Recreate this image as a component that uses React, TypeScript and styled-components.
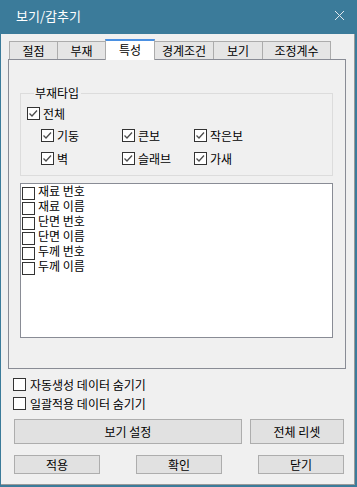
import { createGlobalStyle, styled } from "styled-components";

const GlobalStyle = createGlobalStyle`
    html, body {
        margin: 0;
        padding: 0;
        background: #ffffff;
    }
    * {
        box-sizing: border-box;
    }
`;

const FONT = `"Noto Sans CJK KR", "Noto Sans", sans-serif`;

const Window = styled.div`
    width: 357px;
    height: 487px;
    display: flex;
    flex-direction: column;
    background: #3b7b9a;
    padding: 0 2px 2px 1px;
    font-family: ${FONT};
    font-size: 12px;
    color: #000;
`;
const TitleBar = styled.div`
    height: 34px;
    flex: none;
    display: flex;
    align-items: center;
    justify-content: space-between;
    padding: 0 10px 3px 15px;
    color: #ffffff;
    font-size: 13px;
`;
const Body = styled.div`
    flex: 1;
    background: #f0f0f0;
    border-right: 1px solid #9a9a9a;
    border-bottom: 1px solid #9a9a9a;
    padding: 5px 0 0 7px;
    display: flex;
    flex-direction: column;
`;
const TabRow = styled.div`
    display: flex;
    align-items: flex-end;
    height: 20px;
    margin-left: 1px;
`;
const Tab = styled.div<{ $w: number; $active?: boolean }>`
    width: ${(p) => p.$w}px;
    height: ${(p) => (p.$active ? 21 : 18)}px;
    margin-left: -1px;
    margin-bottom: ${(p) => (p.$active ? -1 : 0)}px;
    position: relative;
    z-index: ${(p) => (p.$active ? 2 : 1)};
    border: 1px solid #acacac;
    border-bottom: none;
    border-top: ${(p) => (p.$active ? "2px solid #4a90e2" : "1px solid #acacac")};
    background: ${(p) => (p.$active ? "#ffffff" : "#e5e5e5")};
    display: flex;
    align-items: center;
    justify-content: center;
    padding-bottom: ${(p) => (p.$active ? 2 : 0)}px;
    line-height: 14px;
    &:first-child {
        margin-left: 0;
    }
`;
const Panel = styled.div`
    width: 338px;
    height: 310px;
    border: 1px solid #898c95;
    padding: 26px 12px 0 11px;
`;
const GroupBox = styled.fieldset`
    margin: 0;
    padding: 7px 0 10px 6px;
    border: 1px solid #dcdcdc;
    min-width: 0;
`;
const Legend = styled.legend`
    margin-left: 7px;
    padding: 0 2px 0 1px;
    line-height: 14px;
    height: 14px;
`;
const Check = styled.label`
    display: flex;
    align-items: center;
    gap: 3px;
    height: 13px;
    line-height: 13px;
    white-space: nowrap;
`;
const SubGrid = styled.div`
    display: grid;
    grid-template-columns: 81px 72px auto;
    row-gap: 10px;
    margin: 9px 0 0 14px;
`;
const ListBox = styled.div`
    margin-top: 7px;
    height: 155px;
    border: 1px solid #898c95;
    background: #ffffff;
    padding: 0 0 0 1px;
`;
const ListItem = styled.div`
    height: 15px;
    display: flex;
    align-items: flex-start;
    gap: 3px;
    span {
        line-height: 12px;
        margin-top: 1px;
    }
    svg {
        margin-top: 3px;
    }
`;
const Options = styled.div`
    margin: 9px 0 0 5px;
    display: flex;
    flex-direction: column;
    gap: 6px;
`;
const OptionCheck = styled(Check)`
    gap: 4px;
`;
const ButtonRow = styled.div<{ $top: number }>`
    width: 330px;
    margin: ${(p) => p.$top}px 0 0 6px;
    display: flex;
    justify-content: space-between;
    gap: 8px;
`;
const Button = styled.button<{ $w?: number; $h: number }>`
    ${(p) => (p.$w ? `width: ${p.$w}px; flex: none;` : "flex: 1;")}
    height: ${(p) => p.$h}px;
    border: 1px solid #adadad;
    background: #e1e1e1;
    font-family: ${FONT};
    font-size: 12px;
    color: #000;
    padding: 0;
    line-height: 14px;
`;

const CheckBox = ({ checked }: { checked?: boolean }) => (
    <svg width="13" height="13" viewBox="0 0 13 13" style={{ flex: "none" }}>
        <rect x="0.5" y="0.5" width="12" height="12" fill="#ffffff" stroke="#333333" />
        {checked && <polyline points="2.5,6.5 5,9 10,3.5" fill="none" stroke="#4d4d4d" strokeWidth="1.3" />}
    </svg>
);

const CloseIcon = () => (
    <svg width="11" height="11" viewBox="0 0 11 11">
        <path d="M1 1 L10 10 M10 1 L1 10" stroke="#dfe8ee" strokeWidth="1" />
    </svg>
);

const tabs = [
    { label: "절점", w: 49 },
    { label: "부재", w: 49 },
    { label: "특성", w: 50, active: true },
    { label: "경계조건", w: 60 },
    { label: "보기", w: 50 },
    { label: "조정계수", w: 69 },
];

const memberTypes = ["기둥", "큰보", "작은보", "벽", "슬래브", "가새"];
const listItems = ["재료 번호", "재료 이름", "단면 번호", "단면 이름", "두께 번호", "두께 이름"];

const App = () => {
    return (
        <>
            <GlobalStyle />
            <Window>
                <TitleBar>
                    <span>보기/감추기</span>
                    <CloseIcon />
                </TitleBar>
                <Body>
                    <TabRow>
                        {tabs.map((t) => (
                            <Tab key={t.label} $w={t.w} $active={t.active}>
                                {t.label}
                            </Tab>
                        ))}
                    </TabRow>
                    <Panel>
                        <GroupBox>
                            <Legend>부재타입</Legend>
                            <Check>
                                <CheckBox checked />
                                전체
                            </Check>
                            <SubGrid>
                                {memberTypes.map((m) => (
                                    <Check key={m}>
                                        <CheckBox checked />
                                        {m}
                                    </Check>
                                ))}
                            </SubGrid>
                        </GroupBox>
                        <ListBox>
                            {listItems.map((item) => (
                                <ListItem key={item}>
                                    <CheckBox />
                                    <span>{item}</span>
                                </ListItem>
                            ))}
                        </ListBox>
                    </Panel>
                    <Options>
                        <OptionCheck>
                            <CheckBox />
                            자동생성 데이터 숨기기
                        </OptionCheck>
                        <OptionCheck>
                            <CheckBox />
                            일괄적용 데이터 숨기기
                        </OptionCheck>
                    </Options>
                    <ButtonRow $top={9}>
                        <Button $h={25}>보기 설정</Button>
                        <Button $h={25} $w={94}>
                            전체 리셋
                        </Button>
                    </ButtonRow>
                    <ButtonRow $top={11}>
                        <Button $h={19} $w={86}>
                            적용
                        </Button>
                        <Button $h={19} $w={86}>
                            확인
                        </Button>
                        <Button $h={19} $w={86}>
                            닫기
                        </Button>
                    </ButtonRow>
                </Body>
            </Window>
        </>
    );
};

export default App;
